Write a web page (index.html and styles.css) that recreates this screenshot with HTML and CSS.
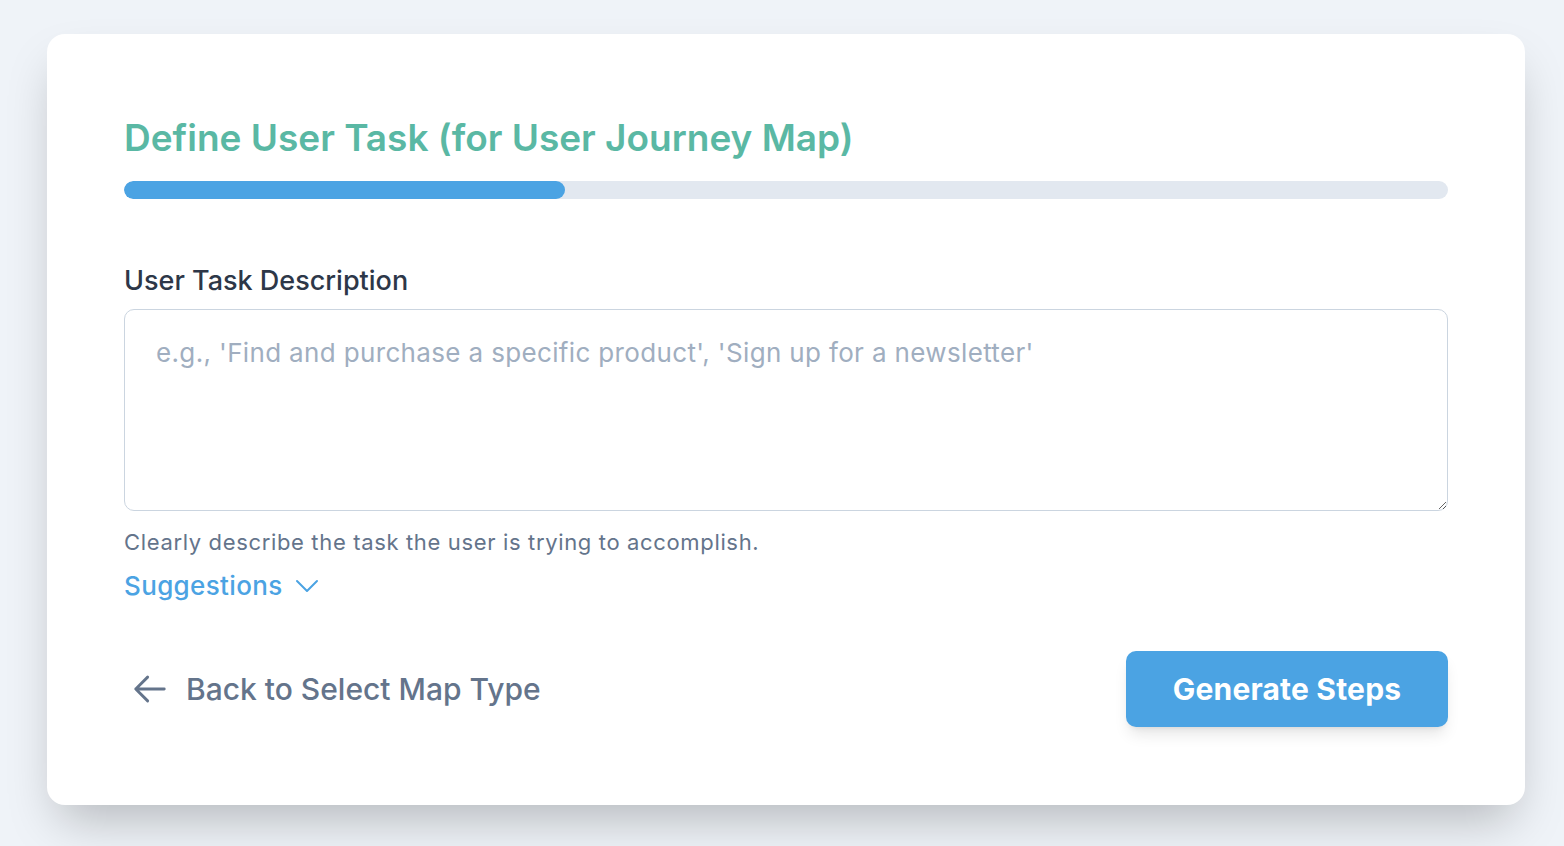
FILE: index.html
```html
<!DOCTYPE html>
<html lang="en">
<head>
<meta charset="utf-8">
<title>Define User Task</title>
<link rel="stylesheet" href="styles.css">
</head>
<body>
<main class="card">
  <h1 class="title">Define User Task (for User Journey Map)</h1>
  <div class="progress"><div class="progress-fill" style="width: 33.3%"></div></div>

  <section class="field">
    <label class="label" for="task">User Task Description</label>
    <textarea id="task" class="textarea" placeholder="e.g., 'Find and purchase a specific product', 'Sign up for a newsletter'"></textarea>
    <p class="help">Clearly describe the task the user is trying to accomplish.</p>
    <button class="suggest" type="button">Suggestions
      <svg class="chev" viewBox="0 0 24 14" fill="none" stroke="currentColor" stroke-width="2" stroke-linecap="round" stroke-linejoin="round"><path d="M2 2l10 10 10-10"/></svg>
    </button>
  </section>

  <footer class="actions">
    <button class="back" type="button">
      <svg class="arrow" viewBox="0 0 24 24" fill="none" stroke="currentColor" stroke-width="1.8" stroke-linecap="round" stroke-linejoin="round"><path d="M10.5 19.5L3 12m0 0l7.5-7.5M3 12h18"/></svg>
      <span>Back to Select Map Type</span>
    </button>
    <button class="primary" type="button">Generate Steps</button>
  </footer>
</main>
</body>
</html>
```

FILE: styles.css
```css
* { box-sizing: border-box; }
html, body { margin: 0; padding: 0; }
body {
  min-height: 846px;
  background: #eff3f8;
  font-family: Inter, "Noto Sans", "Liberation Sans", sans-serif;
  padding: 34px 39px 0 47px;
  overflow: hidden;
}
.card {
  width: 1478px;
  height: 771px;
  background: #ffffff;
  border-radius: 18px;
  box-shadow: 0 25px 50px -12px rgba(0, 0, 0, 0.25);
  padding: 84px 77px 0 77px;
  display: flex;
  flex-direction: column;
}
.title {
  margin: 0;
  font-size: 37px;
  line-height: 40px;
  font-weight: 600;
  color: #5ab8a4;
}
.progress {
  margin-top: 23px;
  height: 18px;
  background: #e2e8f0;
  border-radius: 9px;
  overflow: hidden;
}
.progress-fill {
  height: 100%;
  background: #4ba3e3;
  border-radius: 9px;
}
.field {
  margin-top: 66px;
  display: flex;
  flex-direction: column;
  align-items: flex-start;
}
.label {
  font-size: 27px;
  line-height: 32px;
  font-weight: 500;
  color: #2d3748;
}
.textarea {
  margin-top: 12px;
  width: 100%;
  height: 202px;
  border: 1.5px solid #cbd5e0;
  border-radius: 10px;
  padding: 27px 31px;
  font-family: inherit;
  font-size: 26px;
  letter-spacing: 0.35px;
  line-height: 32px;
  color: #2d3748;
  resize: vertical;
  outline: none;
}
.textarea::placeholder { color: #a0aec0; }
.help {
  margin: 17px 0 0;
  font-size: 22px;
  letter-spacing: 0.65px;
  line-height: 28px;
  color: #64748b;
}
.suggest {
  margin-top: 14px;
  display: flex;
  align-items: center;
  gap: 12px;
  background: none;
  border: 0;
  padding: 0;
  font-family: inherit;
  font-size: 26px;
  letter-spacing: 0.35px;
  line-height: 32px;
  font-weight: 500;
  color: #4ba3e3;
}
.chev { width: 24px; height: 14px; }
.actions {
  margin-top: 49px;
  display: flex;
  justify-content: space-between;
  align-items: center;
}
.back {
  display: flex;
  align-items: center;
  gap: 17px;
  background: none;
  border: 0;
  padding: 0 0 0 7px;
  font-family: inherit;
  font-size: 30px;
  line-height: 36px;
  font-weight: 500;
  color: #64748b;
}
.arrow { width: 38px; height: 38px; }
.primary {
  width: 322px;
  height: 76px;
  border: 0;
  border-radius: 10px;
  background: #4ba3e3;
  color: #ffffff;
  font-family: inherit;
  font-size: 30px;
  letter-spacing: 0.2px;
  font-weight: 700;
  box-shadow: 0 10px 15px -3px rgba(0, 0, 0, 0.1), 0 4px 6px -4px rgba(0, 0, 0, 0.1);
}
```
